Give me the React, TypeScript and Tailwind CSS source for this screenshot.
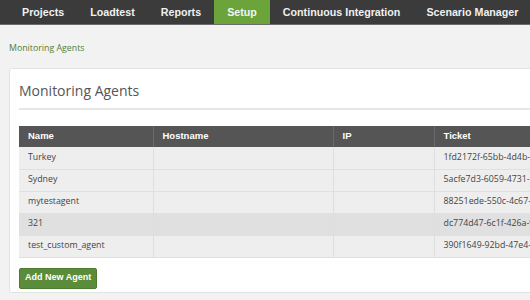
import React from 'react'

const navItems = ['Projects', 'Loadtest', 'Reports', 'Setup', 'Continuous Integration', 'Scenario Manager']

const agents = [
  { name: 'Turkey', hostname: '', ip: '', ticket: '1fd2172f-65bb-4d4b-8a21-7c1e0f3d9b44' },
  { name: 'Sydney', hostname: '', ip: '', ticket: '5acfe7d3-6059-4731-9f0e-2b6d8c41a7e2' },
  { name: 'mytestagent', hostname: '', ip: '', ticket: '88251ede-550c-4c67-b3d9-6e12f7a0c58d' },
  { name: '321', hostname: '', ip: '', ticket: 'dc774d47-6c1f-426a-9e83-0a5b2d71f6c3' },
  { name: 'test_custom_agent', hostname: '', ip: '', ticket: '390f1649-92bd-47e4-8c6a-d14b53e9a072' },
]

export default function App() {
  return (
    <div className="w-[530px] h-[300px] overflow-hidden bg-[#f2f2f2] font-['Open_Sans',sans-serif]">
      {/* Top navigation */}
      <div className="h-[25px] bg-[#3b3b3b] border-b border-[#6b6b6b] flex pl-[9px]">
        {navItems.map((item) => (
          <div
            key={item}
            className={`px-[13px] flex items-center whitespace-nowrap text-[10.7px] font-bold font-['Liberation_Sans',Arial,sans-serif] ${
              item === 'Setup' ? 'bg-[#6aa43a] text-[#f4f4f4]' : 'text-[#f0f0f0]'
            }`}
          >
            {item}
          </div>
        ))}
      </div>

      {/* Breadcrumb */}
      <div className="pl-[9px] pt-[16px] h-[43px] text-[8.8px] leading-[14px] text-[#4e7d3b]">Monitoring Agents</div>

      {/* Card */}
      <div className="ml-[9px] w-[600px] bg-white border border-[#e2e2e2] rounded-[3px] pl-[9px] pt-[12px] pb-[3px]">
        <h1 className="text-[14px] leading-[20px] text-[#555] mb-[7px]">Monitoring Agents</h1>
        <div className="h-[2px] bg-[#e6e6e6] mb-[16px]" />

        <table className="table-fixed border-collapse w-[620px] text-[8.8px]">
          <colgroup>
            <col className="w-[134px]" />
            <col className="w-[180px]" />
            <col className="w-[101px]" />
            <col className="w-[205px]" />
          </colgroup>
          <thead>
            <tr className="h-[21px] bg-[#555555] text-white font-bold font-['Liberation_Sans',Arial,sans-serif] text-[9.5px]">
              <th className="text-left pl-[9px] border-r border-[#6a6a6a]">Name</th>
              <th className="text-left pl-[9px] border-r border-[#6a6a6a]">Hostname</th>
              <th className="text-left pl-[9px] border-r border-[#6a6a6a]">IP</th>
              <th className="text-left pl-[9px]">Ticket</th>
            </tr>
          </thead>
          <tbody className="text-[#444]">
            {agents.map((a) => (
              <tr
                key={a.name}
                className={`h-[22px] border-b border-[#e0e0e0] ${a.name === '321' ? 'bg-[#e0e0e0]' : 'bg-[#eeeeee]'}`}
              >
                <td className="pl-[9px] border-r border-[#dedede] whitespace-nowrap">{a.name}</td>
                <td className="pl-[9px] border-r border-[#dedede]">{a.hostname}</td>
                <td className="pl-[9px] border-r border-[#dedede]">{a.ip}</td>
                <td className="pl-[9px] whitespace-nowrap">{a.ticket}</td>
              </tr>
            ))}
          </tbody>
        </table>

        <button className="mt-[10px] h-[21px] px-[5px] bg-[#5b8c3a] border border-[#4c7a30] rounded-[2px] text-white text-[9px] font-bold font-['Liberation_Sans',Arial,sans-serif]">
          Add New Agent
        </button>
      </div>
    </div>
  )
}
